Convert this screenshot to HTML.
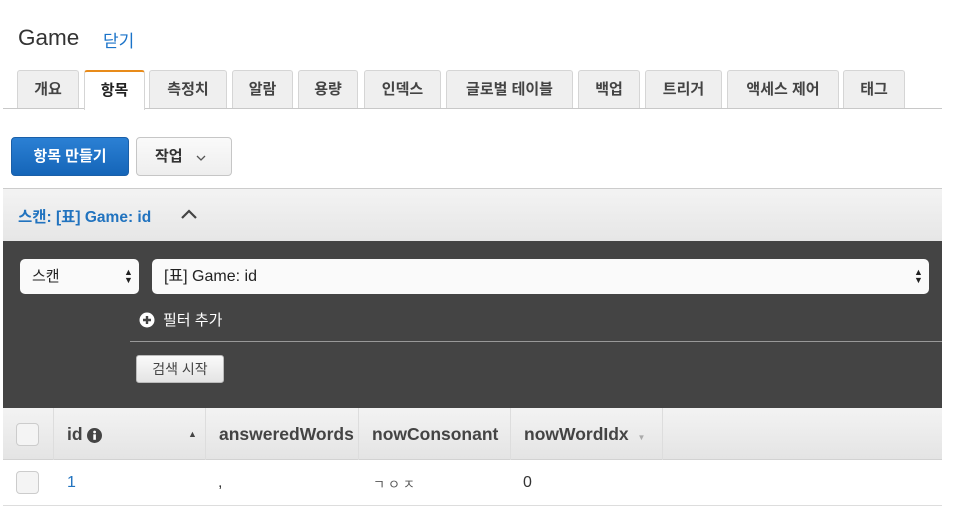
<!DOCTYPE html>
<html><head><meta charset="utf-8"><style>
*{box-sizing:border-box;margin:0;padding:0}
body{width:959px;height:523px;background:#fff;font-family:"Liberation Sans","Noto Sans CJK KR",sans-serif;color:#333;position:relative;overflow:hidden}
.a{position:absolute}
.tab{position:absolute;top:70px;height:38px;background:#efefef;border:1px solid #d5d5d5;border-bottom:none;border-radius:3px 3px 0 0;font-size:15px;font-weight:bold;color:#444;text-align:center;line-height:38px}
.tab.act{background:#fff;border-top:2px solid #e88b1a;height:40px;color:#222;z-index:2}
.chk{position:absolute;width:23px;height:23px;border:1px solid #ccc;border-radius:4px;background:#f4f4f4}
.th{position:absolute;top:408px;height:52px;line-height:52px;font-size:17.5px;font-weight:bold;color:#444;border-left:1px solid #ddd;padding-left:13px;white-space:nowrap;overflow:hidden}
</style></head><body>
<div class="a" style="left:18px;top:25px;font-size:22.5px;color:#333">Game</div>
<div class="a" style="left:103px;top:27px;font-size:17px;color:#1a73c9">닫기</div>

<div class="a" style="left:3px;top:108px;width:939px;height:1px;background:#c8c8c8"></div>
<div class="tab" style="left:17px;width:62px">개요</div>
<div class="tab act" style="left:84px;width:61px">항목</div>
<div class="tab" style="left:149px;width:78px">측정치</div>
<div class="tab" style="left:232px;width:61px">알람</div>
<div class="tab" style="left:298px;width:60px">용량</div>
<div class="tab" style="left:364px;width:77px">인덱스</div>
<div class="tab" style="left:446px;width:127px">글로벌 테이블</div>
<div class="tab" style="left:578px;width:62px">백업</div>
<div class="tab" style="left:645px;width:77px">트리거</div>
<div class="tab" style="left:727px;width:112px">액세스 제어</div>
<div class="tab" style="left:843px;width:62px">태그</div>

<div class="a" style="left:11px;top:137px;width:118px;height:39px;background:linear-gradient(#2b80d4,#1565b8);border:1px solid #1a5fa8;border-radius:4px;color:#fff;font-size:15px;font-weight:bold;text-align:center;line-height:37px">항목 만들기</div>
<div class="a" style="left:136px;top:137px;width:96px;height:39px;background:linear-gradient(#fafafa,#eee);border:1px solid #c6c6c6;border-radius:4px;color:#333;font-size:15px;font-weight:bold;line-height:37px;padding-left:18px">작업</div>
<svg class="a" style="left:195px;top:154px" width="12" height="8"><path d="M2 2 L6 6 L10 2" stroke="#555" stroke-width="1.3" fill="none"/></svg>

<div class="a" style="left:3px;top:188px;width:939px;height:53px;background:linear-gradient(#f3f3f3,#e6e6e6);border-top:1px solid #ccc"></div>
<div class="a" style="left:18px;top:205px;font-size:15.5px;font-weight:bold;color:#2173bf">스캔: [표] Game: id</div>
<svg class="a" style="left:180px;top:208px" width="18" height="12"><path d="M2 10 L9 3 L16 10" stroke="#444" stroke-width="2.2" fill="none"/></svg>

<div class="a" style="left:3px;top:241px;width:939px;height:167px;background:#444"></div>
<div class="a" style="left:20px;top:259px;width:119px;height:35px;background:#fafafa;border-radius:5px;font-size:15px;line-height:35px;padding-left:12px;color:#222">스캔</div>
<div class="a" style="left:124px;top:268px;font-size:9px;line-height:8px;color:#222">▲<br>▼</div>
<div class="a" style="left:152px;top:259px;width:777px;height:35px;background:#fafafa;border-radius:5px;font-size:16px;line-height:35px;padding-left:12px;color:#222">[표] Game: id</div>
<div class="a" style="left:914px;top:268px;font-size:9px;line-height:8px;color:#222">▲<br>▼</div>
<svg class="a" style="left:139px;top:312px" width="16" height="16"><circle cx="8" cy="8" r="7.5" fill="#fff"/><path d="M4 8H12M8 4V12" stroke="#444" stroke-width="2.4"/></svg>
<div class="a" style="left:163px;top:309px;font-size:15px;color:#fff">필터 추가</div>
<div class="a" style="left:130px;top:341px;width:812px;height:1px;background:#999"></div>
<div class="a" style="left:136px;top:355px;width:88px;height:28px;background:linear-gradient(#fafafa,#e4e4e4);border:1px solid #bbb;border-radius:3px;font-size:14px;line-height:26px;text-align:center;color:#444">검색 시작</div>

<div class="a" style="left:3px;top:408px;width:939px;height:52px;background:linear-gradient(#f3f3f3,#e4e4e4);border-bottom:1px solid #d2d2d2"></div>
<div class="chk" style="left:16px;top:423px"></div>
<div class="th" style="left:53px;width:152px">id <svg style="vertical-align:-3px" width="15" height="15"><circle cx="7.5" cy="7.5" r="7.5" fill="#444"/><rect x="6.3" y="6.3" width="2.6" height="5.5" fill="#fff"/><circle cx="7.6" cy="4" r="1.4" fill="#fff"/></svg><span class="a" style="left:134px;top:0;font-size:9px;color:#444">▲</span></div>
<div class="th" style="left:205px;width:153px">answeredWords</div>
<div class="th" style="left:358px;width:152px">nowConsonant</div>
<div class="th" style="left:510px;width:153px;border-right:1px solid #ddd">nowWordIdx <span style="font-size:8px;color:#aaa;margin-left:4px">▼</span></div>

<div class="chk" style="left:16px;top:471px"></div>
<div class="a" style="left:67px;top:474px;font-size:16px;color:#2173bf">1</div>
<div class="a" style="left:218px;top:474px;font-size:16px;color:#333">,</div>
<div class="a" style="left:373px;top:474px;font-size:13px;color:#555;letter-spacing:3px">ㄱㅇㅈ</div>
<div class="a" style="left:523px;top:474px;font-size:16px;color:#333">0</div>
<div class="a" style="left:3px;top:505px;width:939px;height:1px;background:#ddd"></div>
</body></html>
